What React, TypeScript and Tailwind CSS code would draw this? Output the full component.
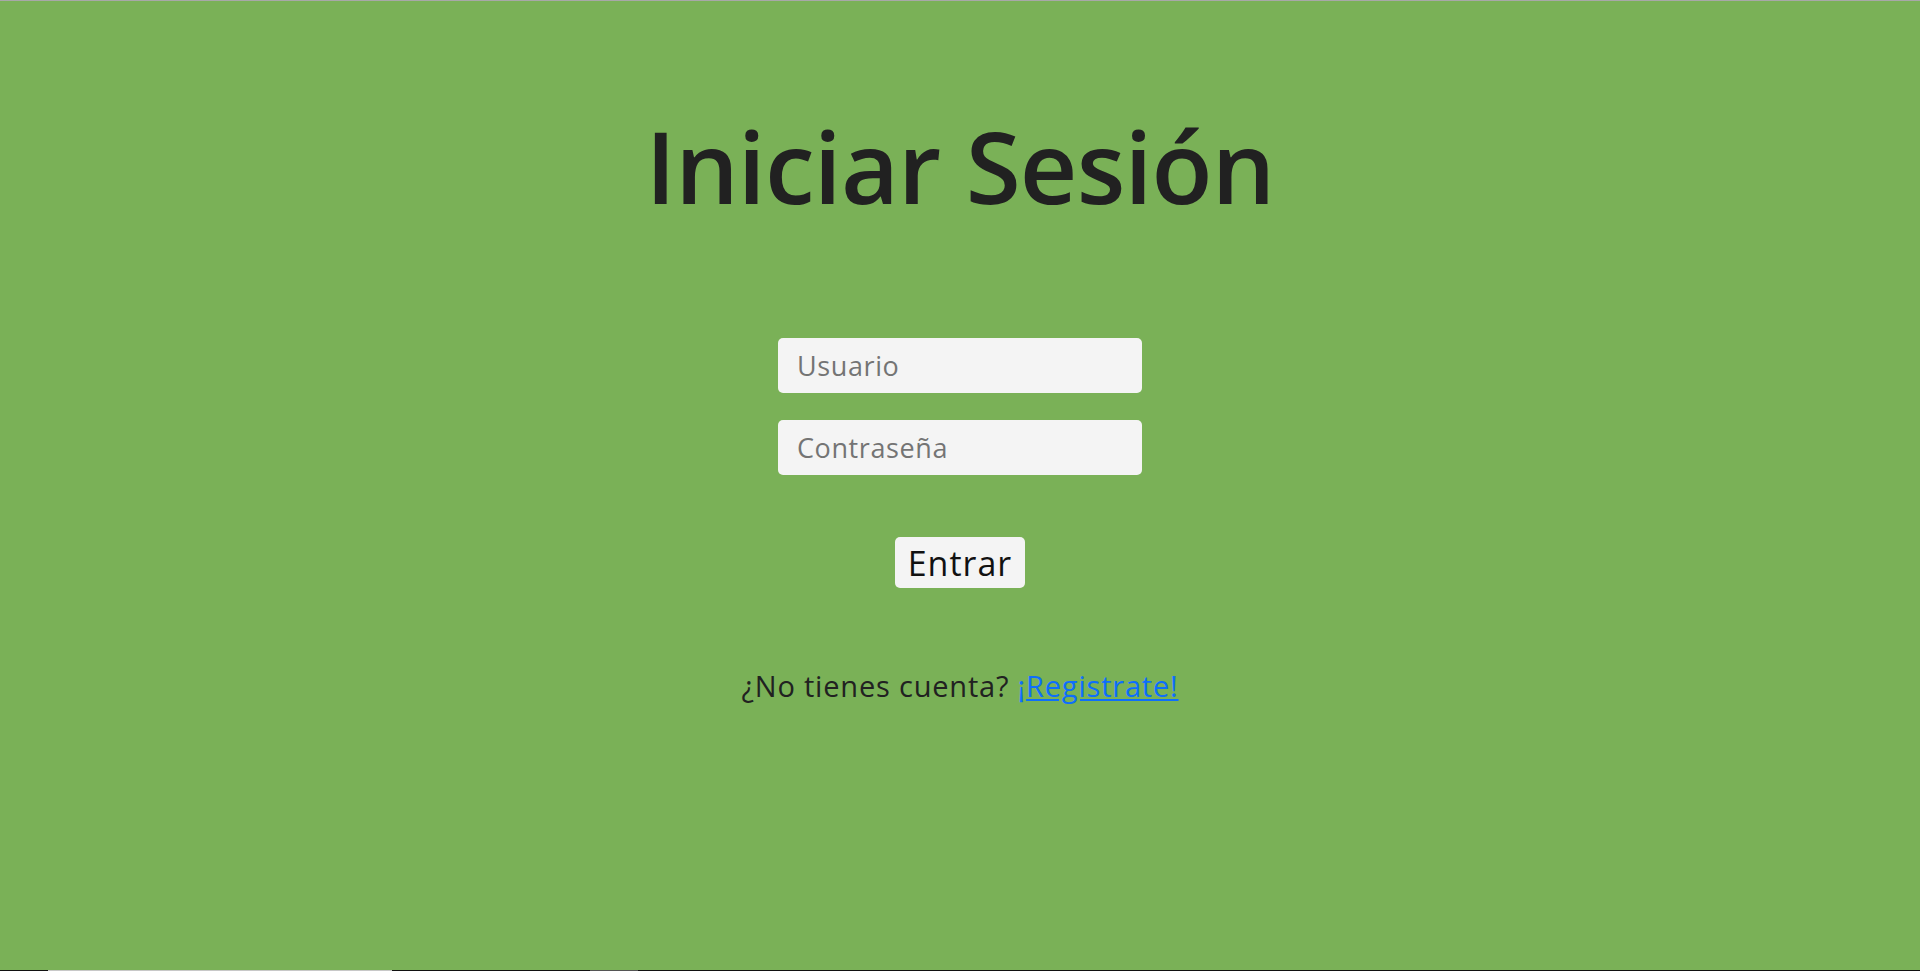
import React from "react";

export default function App() {
  return (
    <div
      className="relative flex h-[971px] w-full flex-col items-center border-t border-[#a8a8a8] bg-[#7ab157] text-[#212121]"
      style={{ fontFamily: '"Open Sans", "Noto Sans", sans-serif' }}
    >
      <h1 className="mt-[114px] text-[100px] font-semibold leading-none tracking-[-0.8px]">
        Iniciar Sesión
      </h1>
      <form
        className="mt-[123px] flex flex-col items-center"
        onSubmit={(e) => e.preventDefault()}
      >
        <input
          type="text"
          placeholder="Usuario"
          className="h-[55px] w-[364px] rounded-[5px] bg-[#f4f4f4] px-[19px] text-[27px] tracking-[0.6px] text-[#212121] outline-none placeholder:text-[#747474]"
        />
        <input
          type="password"
          placeholder="Contraseña"
          className="mt-[27px] h-[55px] w-[364px] rounded-[5px] bg-[#f4f4f4] px-[19px] text-[27px] tracking-[0.6px] text-[#212121] outline-none placeholder:text-[#747474]"
        />
        <button
          type="submit"
          className="mt-[62px] h-[51px] w-[130px] rounded-[5px] bg-[#f4f4f4] text-[34px] leading-none tracking-[1px] text-[#111]"
        >
          Entrar
        </button>
      </form>
      <p className="mt-[83px] text-[29px] leading-none tracking-[0.8px] text-[#212121]">
        ¿No tienes cuenta?{" "}
        <a href="#" className="text-[#0d6efd] underline">
          ¡Registrate!
        </a>
      </p>
      <div className="mt-auto flex h-px w-full">
        <div className="w-[48px] bg-[#111]" />
        <div className="w-[344px] bg-[#c8c8c8]" />
        <div className="w-[198px] bg-[#111]" />
        <div className="w-[48px] bg-[#555]" />
        <div className="flex-1 bg-[#111]" />
      </div>
    </div>
  );
}
